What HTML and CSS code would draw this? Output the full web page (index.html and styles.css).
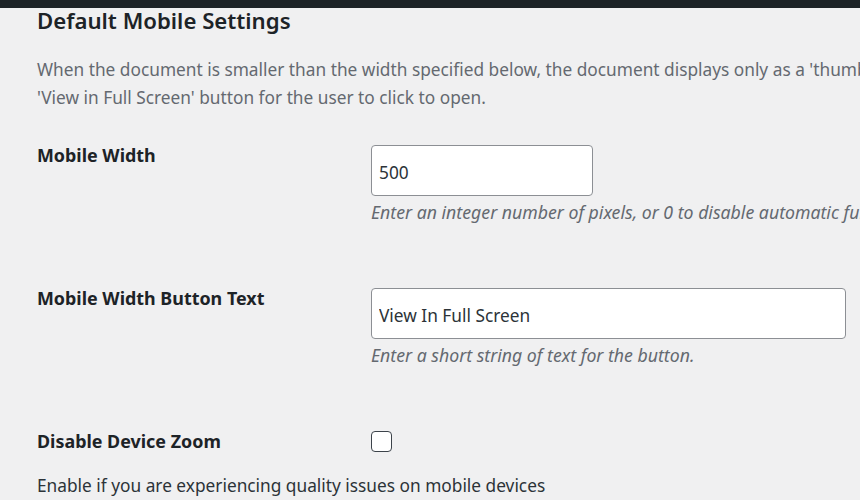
FILE: index.html
```html
<!DOCTYPE html>
<html lang="en">
<head>
  <meta charset="UTF-8" />
  <meta name="viewport" content="width=device-width, initial-scale=1.0" />
  <title>Default Mobile Settings</title>
  <link rel="stylesheet" href="styles.css">
</head>
<body>
  <div class="admin-bar"></div>
  <div class="wrap">
    <h2 class="section-title">Default Mobile Settings</h2>
    <p class="intro">When the document is smaller than the width specified below, the document displays only as a 'thumbnail' with a<br>'View in Full Screen' button for the user to click to open.</p>

    <div class="form-table">
      <div class="form-row">
        <label class="row-label" for="mobile-width">Mobile Width</label>
        <div class="row-field">
          <input class="text-input small" id="mobile-width" type="text" value="500">
          <p class="description">Enter an integer number of pixels, or 0 to disable automatic full screen mode on mobile devices</p>
        </div>
      </div>
      <div class="form-row">
        <label class="row-label" for="button-text">Mobile Width Button Text</label>
        <div class="row-field">
          <input class="text-input wide" id="button-text" type="text" value="View In Full Screen">
          <p class="description">Enter a short string of text for the button.</p>
        </div>
      </div>
      <div class="form-row last">
        <label class="row-label" for="disable-zoom">Disable Device Zoom</label>
        <div class="row-field">
          <input class="checkbox" id="disable-zoom" type="checkbox">
        </div>
      </div>
    </div>

    <p class="note">Enable if you are experiencing quality issues on mobile devices</p>
  </div>
</body>
</html>
```

FILE: styles.css
```css
html, body {
  margin: 0;
  padding: 0;
  overflow: hidden;
}
body {
  background-color: #f0f0f1;
  color: #1d2327;
  font-family: "Noto Sans", "Open Sans", sans-serif;
  font-size: 17.3px;
  line-height: 24px;
  width: 860px;
  height: 500px;
}
.admin-bar {
  height: 8px;
  background-color: #1d2327;
}
.wrap {
  padding-left: 37px;
}
.section-title {
  margin: 0;
  font-size: 22.2px;
  font-weight: 600;
  line-height: 26px;
}
.intro {
  margin: 22px 0 0;
  color: #646970;
  line-height: 28px;
  white-space: nowrap;
}
.form-table {
  margin-top: 31px;
}
.form-row {
  display: grid;
  grid-template-columns: 334px 1fr;
  height: 143px;
}
.form-row.last {
  height: 45px;
}
.row-label {
  font-size: 17.9px;
  font-weight: 700;
  line-height: 24px;
}
.row-field {
  padding-top: 2px;
}
.text-input {
  display: block;
  box-sizing: border-box;
  height: 51px;
  padding: 3px 7px 0;
  margin: 0;
  border: 1px solid #8c8f94;
  border-radius: 4px;
  background: #fff;
  color: #2c3338;
  font-family: inherit;
  font-size: 17.3px;
}
.text-input.small { width: 222px; }
.text-input.wide { width: 475px; }
.description {
  margin: 4px 0 0;
  color: #646970;
  font-size: 17.7px;
  font-style: italic;
  white-space: nowrap;
}
.checkbox {
  appearance: none;
  display: block;
  box-sizing: border-box;
  width: 21px;
  height: 21px;
  margin: 0;
  border: 1px solid #3c434a;
  border-radius: 4px;
  background: #fff;
}
.note {
  margin: 0;
  color: #2c3338;
  white-space: nowrap;
}
```
